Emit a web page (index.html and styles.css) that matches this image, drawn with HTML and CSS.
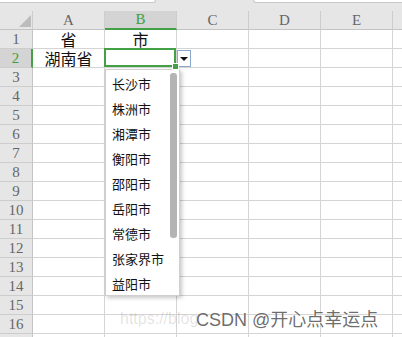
FILE: index.html
```html
<!DOCTYPE html>
<html lang="zh-CN">

<head>
    <meta charset="UTF-8">
    <meta name="viewport" content="width=device-width, initial-scale=1.0">
    <title>数据有效性 - 下拉列表</title>
    <link rel="stylesheet" href="styles.css">
</head>

<body>
    <div class="topbar">
        <div class="tab tab-left"></div>
        <div class="tab tab-right"></div>
    </div>

    <div class="sheet">
        <div class="row head">
            <div class="corner"><span class="tri"></span></div>
            <div class="col">A</div>
            <div class="col sel">B</div>
            <div class="col">C</div>
            <div class="col">D</div>
            <div class="col">E</div>
            <div class="col"></div>
        </div>
        <div class="row">
            <div class="num">1</div>
            <div class="cell">省</div>
            <div class="cell">市</div>
            <div class="cell"></div><div class="cell"></div><div class="cell"></div><div class="cell"></div>
        </div>
        <div class="row">
            <div class="num sel">2</div>
            <div class="cell">湖南省</div>
            <div class="cell active">
                <span class="drop-btn"><span class="arrow"></span></span>
            </div>
            <div class="cell"></div><div class="cell"></div><div class="cell"></div><div class="cell"></div>
        </div>
        <div class="row"><div class="num">3</div><div class="cell"></div><div class="cell"></div><div class="cell"></div><div class="cell"></div><div class="cell"></div><div class="cell"></div></div>
        <div class="row"><div class="num">4</div><div class="cell"></div><div class="cell"></div><div class="cell"></div><div class="cell"></div><div class="cell"></div><div class="cell"></div></div>
        <div class="row"><div class="num">5</div><div class="cell"></div><div class="cell"></div><div class="cell"></div><div class="cell"></div><div class="cell"></div><div class="cell"></div></div>
        <div class="row"><div class="num">6</div><div class="cell"></div><div class="cell"></div><div class="cell"></div><div class="cell"></div><div class="cell"></div><div class="cell"></div></div>
        <div class="row"><div class="num">7</div><div class="cell"></div><div class="cell"></div><div class="cell"></div><div class="cell"></div><div class="cell"></div><div class="cell"></div></div>
        <div class="row"><div class="num">8</div><div class="cell"></div><div class="cell"></div><div class="cell"></div><div class="cell"></div><div class="cell"></div><div class="cell"></div></div>
        <div class="row"><div class="num">9</div><div class="cell"></div><div class="cell"></div><div class="cell"></div><div class="cell"></div><div class="cell"></div><div class="cell"></div></div>
        <div class="row"><div class="num">10</div><div class="cell"></div><div class="cell"></div><div class="cell"></div><div class="cell"></div><div class="cell"></div><div class="cell"></div></div>
        <div class="row"><div class="num">11</div><div class="cell"></div><div class="cell"></div><div class="cell"></div><div class="cell"></div><div class="cell"></div><div class="cell"></div></div>
        <div class="row"><div class="num">12</div><div class="cell"></div><div class="cell"></div><div class="cell"></div><div class="cell"></div><div class="cell"></div><div class="cell"></div></div>
        <div class="row"><div class="num">13</div><div class="cell"></div><div class="cell"></div><div class="cell"></div><div class="cell"></div><div class="cell"></div><div class="cell"></div></div>
        <div class="row"><div class="num">14</div><div class="cell"></div><div class="cell"></div><div class="cell"></div><div class="cell"></div><div class="cell"></div><div class="cell"></div></div>
        <div class="row"><div class="num">15</div><div class="cell"></div><div class="cell"></div><div class="cell"></div><div class="cell"></div><div class="cell"></div><div class="cell"></div></div>
        <div class="row"><div class="num">16</div><div class="cell"></div><div class="cell"></div><div class="cell"></div><div class="cell"></div><div class="cell"></div><div class="cell"></div></div>
        <div class="row"><div class="num"></div><div class="cell"></div><div class="cell"></div><div class="cell"></div><div class="cell"></div><div class="cell"></div><div class="cell"></div></div>

        <!-- 下拉列表 -->
        <ul class="dropdown">
            <li>长沙市</li>
            <li>株洲市</li>
            <li>湘潭市</li>
            <li>衡阳市</li>
            <li>邵阳市</li>
            <li>岳阳市</li>
            <li>常德市</li>
            <li>张家界市</li>
            <li>益阳市</li>
            <span class="scroll"></span>
        </ul>
    </div>

    <div class="watermark">
        <span class="url">https://blog</span>
        <span class="brand">CSDN @开心点幸运点</span>
    </div>
</body>

</html>
```

FILE: styles.css
```css
* {
    box-sizing: border-box;
}

body {
    margin: 0;
    width: 402px;
    height: 337px;
    overflow: hidden;
    background-color: #fff;
    font-family: "Noto Sans CJK SC", sans-serif;
    position: relative;
}

.topbar {
    height: 11px;
    background-color: #e6e6e6;
    display: flex;
    justify-content: space-between;
}

.tab {
    height: 3px;
    background-color: #fff;
    border-bottom: 1px solid #c9c9c9;
}

.tab-left {
    width: 156px;
    border-right: 1px solid #c9c9c9;
    border-bottom-right-radius: 4px;
}

.tab-right {
    width: 149px;
    border-left: 1px solid #c9c9c9;
    border-bottom-left-radius: 4px;
}

.sheet {
    position: relative;
}

.row {
    display: grid;
    grid-template-columns: 33px repeat(6, 72px);
    height: 19px;
}

.row > div {
    border-right: 1px solid #d4d4d4;
    border-bottom: 1px solid #d4d4d4;
    display: flex;
    align-items: center;
    justify-content: center;
}

.head > div {
    background-color: #e6e6e6;
    border-right-color: #cdcdcd;
    border-bottom-color: #c4c4c4;
    color: #666;
    font-family: "Liberation Serif", serif;
    font-size: 15px;
}

.head .corner {
    justify-content: flex-end;
    align-items: flex-end;
    padding: 0 1px 2px 0;
}

.tri {
    width: 0;
    height: 0;
    border-left: 12px solid transparent;
    border-bottom: 12px solid #bcbcbc;
}

.head .col.sel {
    background-color: #d4d4d4;
    color: #3f9f3f;
    border-bottom: 2px solid #44a044;
}

.num {
    background-color: #e6e6e6;
    color: #666;
    font-family: "Liberation Serif", serif;
    font-size: 15px;
    line-height: 1;
    border-right-color: #c4c4c4 !important;
    border-bottom-color: #cdcdcd !important;
}

.num.sel {
    background-color: #d4d4d4;
    color: #3f9f3f;
    border-right: 2px solid #44a044 !important;
}

.cell {
    font-size: 16px;
    color: #111;
    line-height: 1;
}

.cell.active {
    position: relative;
}

.cell.active::after {
    content: "";
    position: absolute;
    left: -1px;
    top: -1px;
    right: 0;
    bottom: 0;
    border: 2px solid #44a044;
}

.cell.active::before {
    content: "";
    position: absolute;
    right: -3px;
    bottom: -3px;
    width: 5px;
    height: 5px;
    background-color: #44a044;
    border: 1px solid #fff;
    z-index: 2;
}

.drop-btn {
    position: absolute;
    left: 72px;
    top: 1px;
    width: 14px;
    height: 17px;
    background-color: #fff;
    border: 1px solid #8aa7cc;
    display: flex;
    align-items: center;
    justify-content: center;
}

.arrow {
    width: 0;
    height: 0;
    border-left: 4px solid transparent;
    border-right: 4px solid transparent;
    border-top: 4px solid #111;
}

.dropdown {
    position: absolute;
    left: 105px;
    top: 58px;
    width: 75px;
    height: 227px;
    margin: 0;
    padding: 1px 0 0 6px;
    list-style: none;
    background-color: #fff;
    border: 1px solid #cfcfcf;
    box-shadow: 2px 2px 4px rgba(0, 0, 0, 0.22);
}

.dropdown li {
    height: 25px;
    line-height: 25px;
    font-size: 13px;
    color: #111;
    white-space: nowrap;
}

.scroll {
    position: absolute;
    left: 64px;
    top: 3px;
    width: 7px;
    height: 165px;
    border-radius: 3px;
    background-color: #b4b4b4;
}

.watermark {
    position: absolute;
    left: 120px;
    top: 309px;
    height: 22px;
    width: 280px;
}

.url {
    position: absolute;
    left: 0;
    top: 1px;
    font-family: "Liberation Sans", sans-serif;
    font-size: 16px;
    color: rgba(0, 0, 0, 0.12);
    white-space: nowrap;
}

.brand {
    position: absolute;
    left: 76px;
    top: 0;
    font-family: "Liberation Sans", "Noto Sans CJK SC", sans-serif;
    font-size: 18px;
    line-height: 22px;
    color: rgba(70, 70, 70, 0.8);
    text-shadow: 0 0 2px #fff;
    white-space: nowrap;
}
```
